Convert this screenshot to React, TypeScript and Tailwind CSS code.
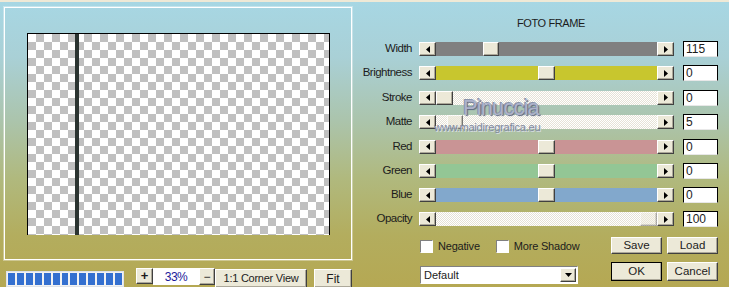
import React from 'react';

const rows = [
  { label: 'Width', value: '115', track: 'bg-[#808080]', thumb: 'ml-[47px] w-[16px]', h: 'h-[24px]' },
  { label: 'Brightness', value: '0', track: 'bg-[#c8c62e]', thumb: 'ml-[102px] w-[17px]', h: 'h-[24px]' },
  { label: 'Stroke', value: '0', track: 'bg-[image:repeating-conic-gradient(#ffffff_0_25%,#e6e2d6_0_50%)] bg-[length:2px_2px]', thumb: 'ml-0 w-[17px]', h: 'h-[25px]' },
  { label: 'Matte', value: '5', track: 'bg-[image:repeating-conic-gradient(#ffffff_0_25%,#e6e2d6_0_50%)] bg-[length:2px_2px]', thumb: 'ml-[11px] w-[16px] opacity-70', h: 'h-[24px]' },
  { label: 'Red', value: '0', track: 'bg-[#c99495]', thumb: 'ml-[102px] w-[17px]', h: 'h-[25px]' },
  { label: 'Green', value: '0', track: 'bg-[#93c695]', thumb: 'ml-[102px] w-[17px]', h: 'h-[24px]' },
  { label: 'Blue', value: '0', track: 'bg-[#82a8cc]', thumb: 'ml-[102px] w-[17px]', h: 'h-[24px]' },
  { label: 'Opacity', value: '100', track: 'bg-[image:repeating-conic-gradient(#ffffff_0_25%,#e6e2d6_0_50%)] bg-[length:2px_2px]', thumb: 'ml-[204px] w-[17px] opacity-40', h: 'h-[24px]' },
];

const raised =
  'bg-[#ece9d8] border border-t-white border-l-white border-r-[#404040] border-b-[#404040] shadow-[inset_-1px_-1px_0_#aca899]';

const sunken = 'border border-t-[#808080] border-l-[#808080] border-b-white border-r-white bg-white';

function Arrow({ dir }: { dir: 'left' | 'right' | 'down' }) {
  if (dir === 'down') {
    return (
      <svg width="7" height="4" viewBox="0 0 7 4">
        <polygon points="0,0 7,0 3.5,4" fill="#000" />
      </svg>
    );
  }
  return (
    <svg width="4" height="7" viewBox="0 0 4 7">
      {dir === 'left' ? <polygon points="4,0 4,7 0,3.5" fill="#000" /> : <polygon points="0,0 0,7 4,3.5" fill="#000" />}
    </svg>
  );
}

function Scrollbar({ track, thumb }: { track: string; thumb: string }) {
  return (
    <div className="flex h-[14px] w-[255px]">
      <div className={`${raised} flex w-[17px] shrink-0 items-center justify-center`}>
        <Arrow dir="left" />
      </div>
      <div className={`flex w-[221px] shrink-0 ${track}`}>
        <div className={`${raised} ${thumb} h-full shrink-0`} />
      </div>
      <div className={`${raised} flex w-[17px] shrink-0 items-center justify-center`}>
        <Arrow dir="right" />
      </div>
    </div>
  );
}

function Button({ label, cls }: { label: string; cls: string }) {
  return <div className={`${raised} flex shrink-0 items-center justify-center whitespace-nowrap ${cls}`}>{label}</div>;
}

export default function App() {
  return (
    <div className="relative h-[287px] w-[729px] overflow-hidden bg-[linear-gradient(180deg,#a7d7e4_0%,#a9d0d6_20%,#abc4ac_42%,#b0b97e_62%,#b3ad5e_82%,#b5a853_100%)] font-['Liberation_Sans',Arial,sans-serif] text-[11px] text-[#1c1c1c]">
      <div className="h-[2px] bg-[#efe9d6]" />
      <div className="flex">
        {/* Preview side */}
        <div className="flex w-[360px] flex-col">
          <div className="ml-[4px] mt-[5px] h-[253px] w-[348px] border border-white pl-[22px] pt-[25px] shadow-[0_0_0_1px_rgba(255,255,255,0.35)]">
            <div className="flex h-[202px] w-[303px] border-x border-t border-black bg-[image:repeating-conic-gradient(#c0c0c0_0_25%,#ffffff_0_50%)] bg-[length:16px_16px]">
              <div className="w-[47px]" />
              <div className="h-full w-[4px] bg-[#2b3431]" />
            </div>
          </div>
          <div className="mt-[8px] flex h-[19px] items-start">
            <div className="ml-[6px] mt-[3px] flex h-[16px] w-[118px] shrink-0 gap-[2px] border border-[#dfe3ea] bg-[#f2f2f2] p-[1px]">
              {Array.from({ length: 13 }).map((_, i) => (
                <div key={i} className="h-full w-[7px] bg-[#3470d0]" />
              ))}
            </div>
            <Button label="+" cls="ml-[12px] h-[16px] w-[17px] text-[13px] font-bold" />
            <div className="flex h-[17px] w-[46px] shrink-0 items-center justify-center bg-white text-[12px] tracking-[-0.5px] text-[#1a1a9a]">33%</div>
            <Button label="−" cls="h-[17px] w-[16px] text-[12px]" />
            <Button label="1:1 Corner View" cls="mt-[1px] h-[19px] w-[92px] tracking-[-0.25px]" />
            <Button label="Fit" cls="ml-[7px] mt-[1px] h-[19px] w-[38px] text-[12px]" />
          </div>
        </div>

        {/* Controls side */}
        <div className="flex w-[369px] flex-col">
          <div className="ml-[157px] mt-[14px] h-[14px] leading-[14px] tracking-[-0.4px]">FOTO FRAME</div>
          <div className="mt-[7px] flex flex-col">
            {rows.map((r) => (
              <div key={r.label} className={`flex items-center ${r.h}`}>
                <div className="w-[52px] shrink-0 whitespace-nowrap text-right text-[11.5px] tracking-[-0.5px]">{r.label}</div>
                <div className="ml-[7px] shrink-0">
                  <Scrollbar track={r.track} thumb={r.thumb} />
                </div>
                <div className="ml-[9px] flex h-[16px] w-[35px] shrink-0 items-center border border-black border-b-[#e8e8e8] bg-white pl-[2px] text-[12px]">
                  {r.value}
                </div>
              </div>
            ))}
          </div>
          <div className="flex pl-[60px]">
            <div className="flex w-[158px] shrink-0 flex-col">
              <div className="mt-[8px] flex h-[15px] items-center whitespace-nowrap tracking-[-0.2px]">
                <div className={`h-[13px] w-[13px] shrink-0 ${sunken}`} />
                <span className="ml-[5px]">Negative</span>
                <div className={`ml-[16px] h-[13px] w-[13px] shrink-0 ${sunken}`} />
                <span className="ml-[5px]">More Shadow</span>
              </div>
              <div className={`mt-[12px] flex h-[18px] items-center justify-between ${sunken}`}>
                <span className="pl-[3px]">Default</span>
                <div className={`${raised} mr-[1px] flex h-[14px] w-[16px] items-center justify-center`}>
                  <Arrow dir="down" />
                </div>
              </div>
            </div>
            <div className="ml-[33px] flex flex-col">
              <div className="mt-[6px] flex gap-[5px]">
                <Button label="Save" cls="h-[17px] w-[51px] text-[11.5px]" />
                <Button label="Load" cls="h-[17px] w-[51px] text-[11.5px]" />
              </div>
              <div className="mt-[8px] flex gap-[5px]">
                <Button label="OK" cls="h-[19px] w-[51px] text-[11.5px] outline outline-1 outline-black -outline-offset-1" />
                <Button label="Cancel" cls="h-[19px] w-[51px] text-[11.5px]" />
              </div>
            </div>
          </div>
        </div>
      </div>

      {/* watermark overlay */}
      <div className="absolute left-[463px] top-[96px] text-[22px] leading-[24px] tracking-[-0.9px] text-[#aeb3cb] [text-shadow:1px_1px_1px_#5b6680,-1px_-1px_0_#8a94ab]">
        Pinuccia
      </div>
      <div className="absolute left-[434px] top-[121px] text-[11px] leading-[12px] tracking-[-0.2px] text-[#7f889c] [text-shadow:1px_1px_0_#d8dce4]">
        www.maidiregrafica.eu
      </div>
    </div>
  );
}
